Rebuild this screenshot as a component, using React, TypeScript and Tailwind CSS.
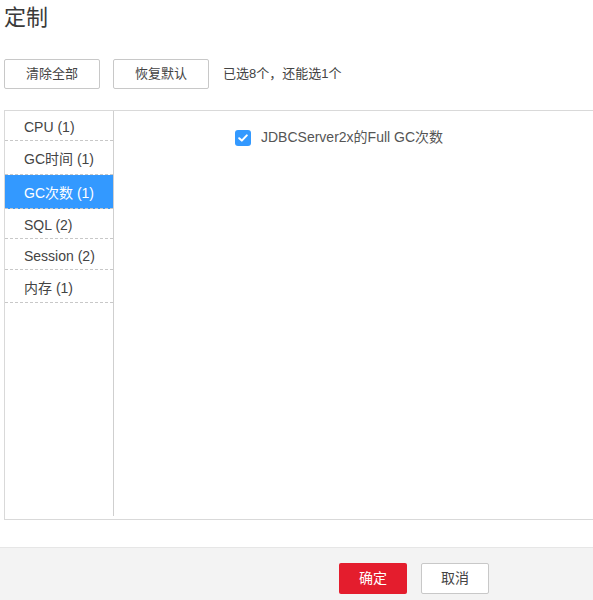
import React from 'react';

const font = { fontFamily: '"Liberation Sans", "Noto Sans CJK SC", sans-serif' };

const groups = [
  { label: 'CPU (1)', h: 'h-[30px]' },
  { label: 'GC时间 (1)', h: 'h-[34px]' },
  { label: 'GC次数 (1)', h: 'h-[34px]', active: true },
  { label: 'SQL (2)', h: 'h-[30px]' },
  { label: 'Session (2)', h: 'h-[31px]' },
  { label: '内存 (1)', h: 'h-[33px]' },
];

function CheckIcon() {
  return (
    <span className="flex h-[16px] w-[16px] items-center justify-center rounded-[3px] bg-[#3399ff]">
      <svg width="10" height="8" viewBox="0 0 10 8" fill="none">
        <path d="M1.2 4.2 L3.8 6.6 L8.8 1.4" stroke="white" strokeWidth="2" strokeLinecap="round" strokeLinejoin="round" />
      </svg>
    </span>
  );
}

export default function App() {
  return (
    <div className="flex h-[600px] w-[593px] flex-col overflow-hidden bg-white text-[#444]" style={font}>
      <h1 className="pl-[4px] pt-[5px] text-[22px] leading-[26px] font-normal text-[#3a3a3a]">定制</h1>

      <div className="mt-[28px] flex items-center pl-[4px]">
        <button className="h-[30px] w-[96px] rounded-[2px] border border-[#c8c8c8] bg-white text-[13px] text-[#444]">
          清除全部
        </button>
        <button className="ml-[13px] h-[30px] w-[96px] rounded-[2px] border border-[#c8c8c8] bg-white text-[13px] text-[#444]">
          恢复默认
        </button>
        <span className="ml-[14px] text-[13px] text-[#444]">已选8个，还能选1个</span>
      </div>

      <div className="ml-[4px] mt-[21px] flex h-[410px] w-[600px] shrink-0 border border-[#d9d9d9] pb-[3px]">
        <ul className="w-[109px] shrink-0 border-r border-[#cfcfcf]">
          {groups.map((g) => (
            <li
              key={g.label}
              className={`${g.h} flex items-center border-b border-dashed border-[#c8c8c8] pl-[19px] pt-[4px] text-[14px] ${
                g.active ? 'bg-[#3399ff] text-white' : 'text-[#444]'
              }`}
            >
              {g.label}
            </li>
          ))}
        </ul>
        <div className="flex-1 pl-[121px] pt-[16px]">
          <label className="flex items-center gap-[10px]">
            <CheckIcon />
            <span className="text-[14px] text-[#555]">JDBCServer2x的Full GC次数</span>
          </label>
        </div>
      </div>

      <div className="mt-[27px] flex flex-1 justify-end gap-[14px] border-t border-[#e6e6e6] bg-[#f3f3f3] pr-[104px] pt-[15px]">
        <button className="h-[31px] w-[68px] rounded-[2px] bg-[#e41d2d] text-[14px] text-white">确定</button>
        <button className="h-[31px] w-[68px] rounded-[2px] border border-[#c8c8c8] bg-white text-[14px] text-[#444]">
          取消
        </button>
      </div>
    </div>
  );
}
